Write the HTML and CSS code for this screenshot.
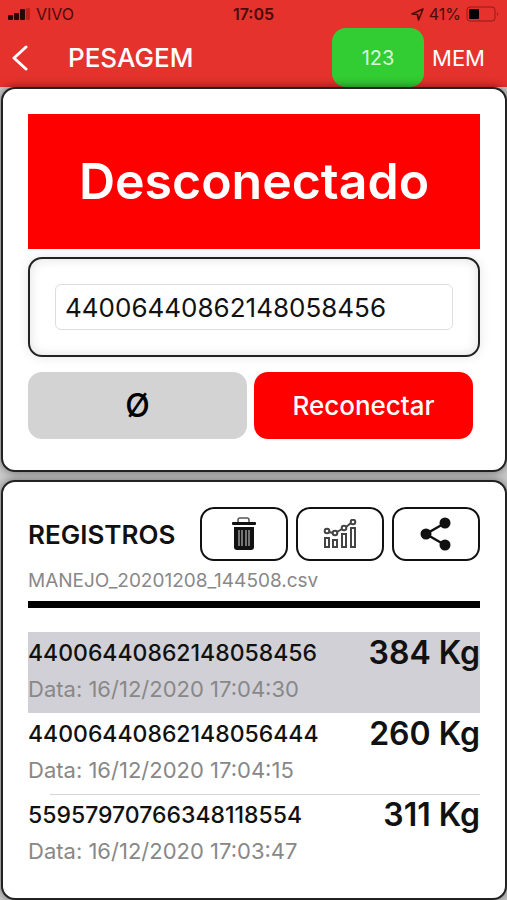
FILE: index.html
```html
<!DOCTYPE html>
<html lang="pt-BR">
<head>
    <meta charset="UTF-8">
    <meta name="viewport" content="width=device-width, initial-scale=1.0">
    <title>Pesagem</title>
    <link rel="stylesheet" href="styles.css">
</head>
<body>
    <header class="header">
        <!-- Phone status bar -->
        <div class="status-bar">
            <div class="status-left">
                <svg width="23" height="12" viewBox="0 0 23 12">
                    <rect x="0" y="7" width="5" height="5" rx="1" fill="#2a0605"/>
                    <rect x="6" y="5" width="5" height="7" rx="1" fill="#2a0605"/>
                    <rect x="12" y="1" width="5" height="11" rx="1" fill="#2a0605"/>
                    <rect x="18" y="0" width="4" height="12" rx="1" fill="#b5231f"/>
                </svg>
                <span>VIVO</span>
            </div>
            <div class="status-time">17:05</div>
            <div class="status-right">
                <svg width="13" height="13" viewBox="0 0 13 13">
                    <path d="M1 6 L12 1 L7.500 12 L6.500 6.500 Z" fill="none" stroke="#4a0b09" stroke-width="1.600" stroke-linejoin="round"/>
                </svg>
                <span>41%</span>
                <svg width="33" height="16" viewBox="0 0 33 16">
                    <rect x="1" y="1" width="28" height="14" rx="3" fill="none" stroke="#8f1b18" stroke-width="1"/>
                    <rect x="3" y="3" width="10" height="10" rx="1" fill="#000"/>
                    <path d="M31 6 v4 q2 -2 0 -4" fill="#8f1b18"/>
                </svg>
            </div>
        </div>

        <!-- Navigation -->
        <nav class="nav">
            <button class="back" aria-label="Voltar">
                <svg width="18" height="28" viewBox="0 0 18 28">
                    <path d="M16 3 L4 14 L16 25" fill="none" stroke="#fff" stroke-width="3" stroke-linecap="round" stroke-linejoin="round"/>
                </svg>
            </button>
            <h1>PESAGEM</h1>
            <button class="nav-number">123</button>
            <button class="nav-mem">MEM</button>
        </nav>
    </header>

    <main class="content">
        <!-- Scale -->
        <section class="card scale">
            <div class="banner">Desconectado</div>
            <div class="tag-box">
                <input class="tag-input" type="text" aria-label="Identificação" value="44006440862148058456">
            </div>
            <div class="actions">
                <button class="btn btn-zero">Ø</button>
                <button class="btn btn-connect">Reconectar</button>
            </div>
        </section>

        <!-- Records -->
        <section class="card records">
            <div class="records-head">
                <h2>REGISTROS</h2>
                <div class="tools">
                    <button class="tool" aria-label="Excluir">
                        <svg width="26" height="34" viewBox="0 0 26 34">
                            <path d="M7 6 V3 Q7 1 9 1 H16 Q18 1 18 3 V6" fill="none" stroke="#555" stroke-width="1.500"/>
                            <rect x="1" y="5" width="24" height="3" rx="1" fill="#111"/>
                            <path d="M3 10 H23 V30 Q23 33 20 33 H6 Q3 33 3 30 Z" fill="#111"/>
                            <path d="M8 13 V29 M11 13 V29 M15 13 V29 M18 13 V29" stroke="#aaa" stroke-width="1.300"/>
                        </svg>
                    </button>
                    <button class="tool" aria-label="Gráfico">
                        <svg width="34" height="30" viewBox="0 0 34 30">
                            <g fill="none" stroke="#444" stroke-width="2">
                                <rect x="2" y="19" width="4" height="9"/>
                                <rect x="10" y="21" width="4" height="7"/>
                                <rect x="19" y="15" width="4" height="13"/>
                                <rect x="28" y="9" width="4" height="19"/>
                                <path d="M6 13 L10 14 M14 13 L19 10 M23 8 L28 4"/>
                                <circle cx="4" cy="12" r="2.300"/>
                                <circle cx="12" cy="14" r="2.300"/>
                                <circle cx="21" cy="9" r="2.300"/>
                                <circle cx="30" cy="3" r="2.300"/>
                            </g>
                        </svg>
                    </button>
                    <button class="tool" aria-label="Compartilhar">
                        <svg width="32" height="34" viewBox="0 0 32 34">
                            <path d="M25 6 L6 17 L25 28" fill="none" stroke="#111" stroke-width="2.500"/>
                            <circle cx="25" cy="6" r="5.500" fill="#111"/>
                            <circle cx="6" cy="17" r="5.500" fill="#111"/>
                            <circle cx="25" cy="28" r="5.500" fill="#111"/>
                        </svg>
                    </button>
                </div>
            </div>
            <p class="file-name">MANEJO_20201208_144508.csv</p>
            <ul class="record-list">
                <li class="record selected">
                    <div>
                        <div class="record-id">44006440862148058456</div>
                        <div class="record-date">Data: 16/12/2020 17:04:30</div>
                    </div>
                    <div class="record-weight">384 Kg</div>
                </li>
                <li class="record">
                    <div>
                        <div class="record-id">44006440862148056444</div>
                        <div class="record-date">Data: 16/12/2020 17:04:15</div>
                    </div>
                    <div class="record-weight">260 Kg</div>
                </li>
                <li class="record divided">
                    <div>
                        <div class="record-id">55957970766348118554</div>
                        <div class="record-date">Data: 16/12/2020 17:03:47</div>
                    </div>
                    <div class="record-weight">311 Kg</div>
                </li>
            </ul>
        </section>
    </main>
</body>
</html>
```
FILE: styles.css
```css
* {
    margin: 0;
    padding: 0;
    box-sizing: border-box;
    font-family: Inter, "Liberation Sans", sans-serif;
}

body {
    background: #ccc;
    color: #111;
}

button {
    border: none;
    background: none;
    cursor: pointer;
}

svg {
    display: block;
}

/* Header */
.header {
    background: #e5322d;
}

.status-bar {
    display: grid;
    grid-template-columns: 1fr auto 1fr;
    align-items: center;
    height: 28px;
    padding: 0 8px;
    font-size: 16px;
    color: #4a0b09;
}

.status-left,
.status-right {
    display: flex;
    align-items: center;
    gap: 5px;
}

.status-right {
    justify-content: flex-end;
}

.status-time {
    font-weight: 600;
}

.nav {
    display: flex;
    align-items: center;
    height: 59px;
    padding-right: 22px;
    color: #fff;
}

.back {
    padding: 8px 40px 8px 10px;
}

.nav h1 {
    flex: 1;
    font-size: 26px;
    font-weight: 500;
}

.nav-number {
    width: 92px;
    height: 59px;
    border-radius: 14px;
    background: #32cd32;
    color: #d8f8d8;
    font-size: 20px;
}

.nav-mem {
    margin-left: 8px;
    color: #fff;
    font-size: 22px;
}

/* Cards */
.content {
    display: flex;
    flex-direction: column;
    gap: 8px;
    padding-left: 1px;
}

.card {
    padding: 25px;
    border: 2px solid #222;
    border-radius: 14px;
    background: #fff;
    box-shadow: 0 0 10px rgba(0, 0, 0, 0.5);
}

.scale {
    padding-bottom: 31px;
}

.records {
    padding-bottom: 23px;
}

.banner {
    background: #f00;
    color: #fff;
    font-size: 50px;
    font-weight: 600;
    line-height: 135px;
    text-align: center;
}

.tag-box {
    margin: 8px 0 15px;
    padding: 25px;
    border: 2px solid #222;
    border-radius: 14px;
    box-shadow: 0 0 12px rgba(0, 0, 0, 0.1), inset 0 0 12px rgba(0, 0, 0, 0.12);
}

.tag-input {
    display: block;
    width: 100%;
    height: 46px;
    padding: 0 9px;
    border: 1px solid #ddd;
    border-radius: 6px;
    background: #fff;
    color: #111;
    font-size: 26px;
}

.actions {
    display: flex;
    gap: 7px;
    padding-right: 7px;
}

.btn {
    flex: 1;
    height: 67px;
    border-radius: 14px;
    font-size: 26px;
    font-weight: 500;
}

.btn-zero {
    background: #d3d3d3;
    color: #000;
    font-size: 32px;
}

.btn-connect {
    background: #f00;
    color: #fff;
}

/* Records */
.records-head {
    display: flex;
    align-items: center;
    justify-content: space-between;
}

.records-head h2 {
    font-size: 26px;
    font-weight: 600;
}

.tools {
    display: flex;
    gap: 8px;
}

.tool {
    display: flex;
    align-items: center;
    justify-content: center;
    width: 88px;
    height: 54px;
    border: 2px solid #111;
    border-radius: 14px;
}

.file-name {
    padding: 8px 0;
    border-bottom: 7px solid #000;
    color: #888;
    font-size: 19px;
    line-height: 24px;
}

.record-list {
    margin-top: 24px;
    list-style: none;
}

.record {
    display: flex;
    justify-content: space-between;
    height: 81px;
    padding-top: 4px;
}

.record.selected {
    background: #d1d0d6;
}

/* separator starts after a small inset */
.record.divided {
    background: linear-gradient(#d4d4d4, #d4d4d4) 22px 0 / 100% 1px no-repeat;
}

.record-id {
    font-size: 23px;
    font-weight: 500;
    line-height: 34px;
}

.record-date {
    color: #888;
    font-size: 22px;
    line-height: 38px;
}

.record-weight {
    font-size: 32px;
    font-weight: 600;
    line-height: 34px;
}
```
